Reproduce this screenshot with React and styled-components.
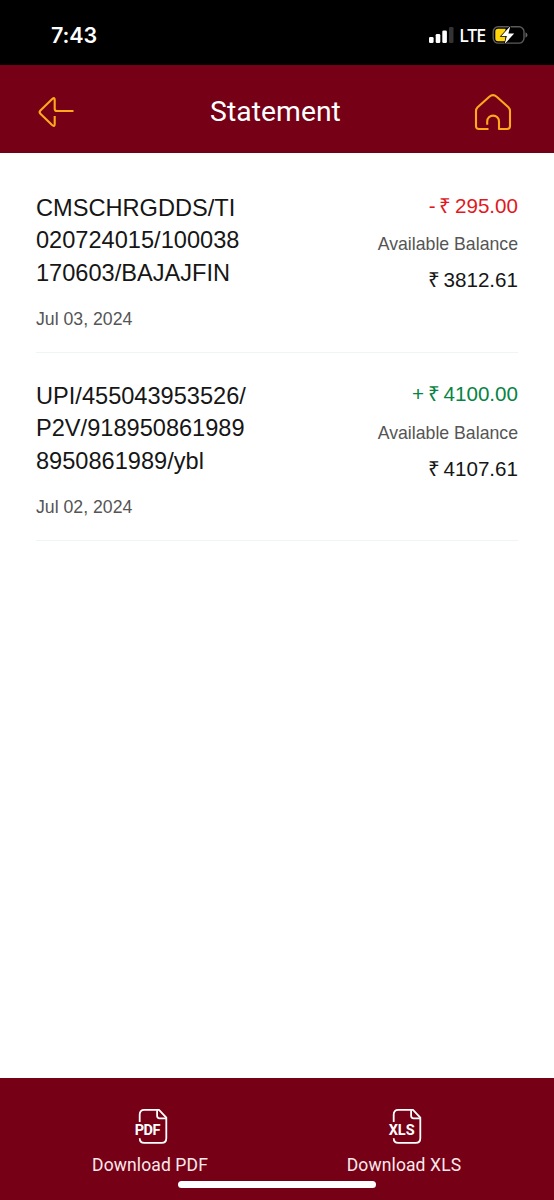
import React from 'react';
import styled, { createGlobalStyle } from 'styled-components';

const GlobalStyle = createGlobalStyle`
  * { box-sizing: border-box; }
  body { margin: 0; background: #fff; }
`;

const Screen = styled.div`
  position: relative;
  display: flex;
  flex-direction: column;
  height: 1200px;
  background: #fff;
  font-family: 'Liberation Sans', Arial, sans-serif;
`;

const StatusBar = styled.div`
  display: flex;
  align-items: center;
  justify-content: space-between;
  height: 65px;
  padding: 5px 26px 0 51px;
  background: #000;
  color: #fff;
  font-family: Inter, sans-serif;
`;

const Clock = styled.span`
  font-size: 21.5px;
  font-weight: 600;
  letter-spacing: -0.1px;
`;

const StatusIcons = styled.div`
  display: flex;
  align-items: center;
`;

const Network = styled.span`
  margin: 0 7px 0 5px;
  font-family: 'Noto Sans', sans-serif;
  font-size: 17.8px;
  font-weight: 500;
  line-height: 24px;
  letter-spacing: -1.1px;
`;

const Header = styled.header`
  display: flex;
  align-items: center;
  justify-content: space-between;
  height: 88px;
  padding: 5px 42px 0 37px;
  background: #760016;
`;

const IconButton = styled.button`
  display: flex;
  padding: 0;
  border: 0;
  background: none;
`;

const Title = styled.h1`
  margin: 0 0 0 2px;
  color: #fff;
  font: 400 28.3px/36px Roboto, sans-serif;
  letter-spacing: 0.05px;
`;

const List = styled.main`
  flex: 1;
  padding: 12px 36px 0;
`;

const Entry = styled.article`
  display: flex;
  justify-content: space-between;
  height: 188px;
  padding-top: 23px;
  border-bottom: 1px solid #edf5f5;
`;

const Details = styled.div`
  padding-top: 3.5px;
`;

const Description = styled.div`
  color: #161616;
  font-size: 23.6px;
  line-height: 32.5px;
  white-space: pre-line;
`;

const EntryDate = styled.div`
  margin-top: 18px;
  color: #555;
  font-size: 17.7px;
  line-height: 24px;
`;

const Figures = styled.div`
  display: flex;
  flex-direction: column;
  align-items: flex-end;
`;

const tones = { debit: '#e0191f', credit: '#078443', plain: '#161616' };

const Amount = styled.div`
  color: ${({ $tone }) => tones[$tone]};
  font-size: 20.6px;
  line-height: 36px;
  white-space: pre;
  word-spacing: -2px;
`;

const BalanceLabel = styled.div`
  margin-top: ${({ $gap }) => $gap}px;
  color: #555;
  font-size: 17.7px;
  line-height: 36px;
`;

const Footer = styled.footer`
  display: grid;
  grid-template-columns: 1fr 1fr;
  height: 122px;
  padding: 29.5px 23px 0;
  background: #760016;
`;

const Download = styled.button`
  display: flex;
  flex-direction: column;
  align-items: center;
  gap: 7px;
  padding: 0;
  border: 0;
  background: none;
  color: #fbe9ec;
  font: 400 17.5px/24px Roboto, sans-serif;
  letter-spacing: 0.12px;
`;

const HomeIndicator = styled.div`
  position: absolute;
  bottom: 12px;
  left: 178px;
  width: 198px;
  height: 7px;
  border-radius: 4px;
  background: #fff;
`;

const Signal = () => (
  <svg width="25" height="18" viewBox="0 0 25 18" fill="#fff">
    <rect x="0" y="11" width="4.6" height="6" rx="1.3" />
    <rect x="6.7" y="8" width="4.6" height="9" rx="1.3" />
    <rect x="13.3" y="4.5" width="4.6" height="12.5" rx="1.3" />
    <rect x="20" y="1" width="4.5" height="16" rx="1.3" fill="#333" />
  </svg>
);

const Battery = () => (
  <svg width="36" height="20" viewBox="0 0 36 20">
    <rect x="1.2" y="1.7" width="30.8" height="16.4" rx="5" fill="none" stroke="#5b5b5b" strokeWidth="1.4" />
    <path d="M33.5 7.2q2 1 2 2.8t-2 2.8z" fill="#666" />
    <path d="M6 3.8h7.5v12.4H6q-2.7 0-2.7-2.7v-7q0-2.7 2.7-2.7z" fill="#ffd60a" />
    <path d="M18.3 1.3 9.3 11h5.5l-2.1 7.9 9.5-10.3h-5.8z" fill="#fff" stroke="#000" strokeWidth="1.4" paintOrder="stroke" />
  </svg>
);

const BackIcon = () => (
  <svg width="38" height="34" viewBox="0 0 38 34" fill="none" stroke="#fca91d" strokeWidth="2.1" strokeLinejoin="round">
    <path d="M36.5 16H20q-2.3 0-2.3-2.3V5q0-3-2.2-1.2L3.4 15.5q-1.6 1.6 0 3.2l11.4 11.1q2.9 2.6 2.9-.8v-8" />
  </svg>
);

const HomeIcon = () => (
  <svg width="38" height="38" viewBox="0 0 38 38" fill="none" stroke="#fca91d" strokeWidth="2.1" strokeLinejoin="round">
    <path d="M14.5 36H5q-3 0-3-3V18q0-2.2 1.6-3.8L15.3 3.8q3.7-3.2 7.4 0l11.7 10.4Q36 15.8 36 18v15q0 3-3 3h-8v-7.5a5.7 5.7 0 0 0-11.8 0v3.2" />
  </svg>
);

const FileIcon = ({ label }) => (
  <svg width="32" height="38" viewBox="2 0 32 38" fill="none" stroke="#fff" strokeWidth="1.8" strokeLinejoin="round" overflow="visible">
    <path d="M6.2 14V6.5q0-4.6 4.6-4.6h14.7l7.3 7.8v20.5q0 4.6-4.6 4.6H10.8q-4.6 0-4.6-4.6" transform="translate(1.5 0)" />
    <path d="M25.1 2.2v5.6q0 2.5 2.5 2.5h6.3" />
    <text x="15.7" y="27" textAnchor="middle" textLength="26" fontFamily="Roboto, sans-serif" fontSize="14.5" fontWeight="700" fill="#fff" stroke="none">{label}</text>
  </svg>
);

const entries = [
  { text: 'CMSCHRGDDS/TI\n020724015/100038\n170603/BAJAJFIN', date: 'Jul 03, 2024', amount: '- ₹ 295.00', tone: 'debit', balance: '₹ 3812.61', gap: 1.5 },
  { text: 'UPI/455043953526/\nP2V/918950861989\n8950861989/ybl', date: 'Jul 02, 2024', amount: '+ ₹ 4100.00', tone: 'credit', balance: '₹ 4107.61', gap: 2.5 },
];

export default function App() {
  return (
    <Screen>
      <GlobalStyle />
      <StatusBar>
        <Clock>7:43</Clock>
        <StatusIcons>
          <Signal />
          <Network>LTE</Network>
          <Battery />
        </StatusIcons>
      </StatusBar>
      <Header>
        <IconButton aria-label="Back"><BackIcon /></IconButton>
        <Title>Statement</Title>
        <IconButton aria-label="Home"><HomeIcon /></IconButton>
      </Header>
      <List>
        {entries.map((e) => (
          <Entry key={e.date}>
            <Details>
              <Description>{e.text}</Description>
              <EntryDate>{e.date}</EntryDate>
            </Details>
            <Figures>
              <Amount $tone={e.tone}>{e.amount}</Amount>
              <BalanceLabel $gap={e.gap}>Available Balance</BalanceLabel>
              <Amount $tone="plain">{e.balance}</Amount>
            </Figures>
          </Entry>
        ))}
      </List>
      <Footer>
        <Download><FileIcon label="PDF" />Download PDF</Download>
        <Download><FileIcon label="XLS" />Download XLS</Download>
      </Footer>
      <HomeIndicator />
    </Screen>
  );
}
